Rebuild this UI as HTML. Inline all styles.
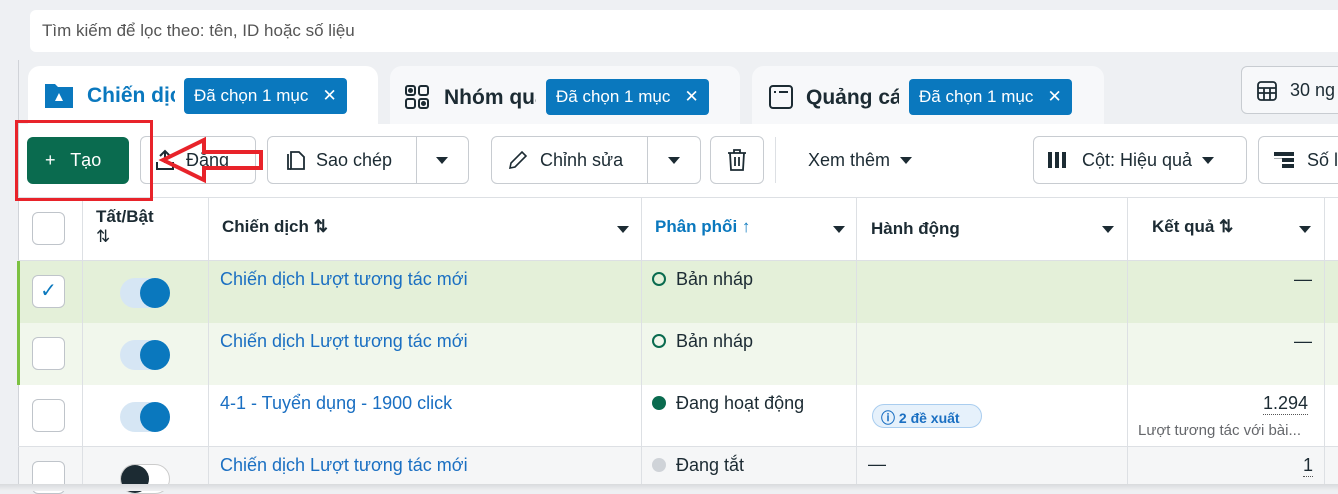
<!DOCTYPE html><html><head><meta charset="utf-8"><style>
*{box-sizing:border-box;margin:0;padding:0}
body{width:1338px;height:491px;overflow:hidden;background:#eef0f3;font-family:"Liberation Sans",sans-serif;color:#1c2b33;position:relative;font-size:18px}
.a{position:absolute}
.search{left:30px;top:10px;width:1320px;height:42px;background:#fff;border-radius:6px;color:#555;font-size:17px;padding:11px 12px}
.tab{top:66px;height:64px;border-radius:12px 12px 0 0;background:#f7f8fa}
.pill{background:#0a78be;color:#fff;font-size:17px;border-radius:4px;height:36px;padding:8px 10px;white-space:nowrap}
.btn{top:136px;height:48px;border:1px solid #c8ccd1;border-radius:6px;background:#fff;font-size:18px;padding:13px 0}
.hdr{font-weight:bold;font-size:17px}
.vl{position:absolute;top:197px;bottom:0;width:1px;background:#dde0e4}
.hl{position:absolute;left:18px;right:0;height:1px;background:#dde0e4}
.cb{position:absolute;left:32px;width:33px;height:33px;border:1px solid #bfc4ca;border-radius:6px;background:#fff}
.tg{position:absolute;left:120px;width:50px;height:30px;border-radius:15px;background:#d6e6f4}
.tg:after{content:"";position:absolute;right:0;top:0;width:30px;height:30px;border-radius:50%;background:#0a78be}
.lnk{position:absolute;left:220px;color:#1a6fc2;font-size:18px}
.st{position:absolute;left:652px;font-size:18px}
.dot{display:inline-block;width:14px;height:14px;border-radius:50%;margin-right:10px;vertical-align:-1px}
.car{display:inline-block;width:0;height:0;border-left:6px solid transparent;border-right:6px solid transparent;border-top:7px solid #1c2b33;vertical-align:2px}
.tt{font-size:21px;font-weight:bold;overflow:hidden;white-space:nowrap}
</style></head><body>
<div class="a search">Tìm kiếm để lọc theo: tên, ID hoặc số liệu</div>
<div class="a" style="left:18px;top:60px;width:1px;height:431px;background:#d0d3d8"></div>
<div class="a tab" style="left:28px;width:350px;background:#fff"></div>
<div class="a tab" style="left:390px;width:350px"></div>
<div class="a tab" style="left:752px;width:352px"></div>
<div class="a" style="left:1241px;top:66px;width:110px;height:48px;border:1px solid #c8ccd1;border-radius:6px;background:#f7f8fa;padding:13px 0 0 48px">30 ng</div>
<svg class="a" style="left:1256px;top:80px" width="22" height="22" viewBox="0 0 22 22" fill="none" stroke="#1c2b33" stroke-width="1.8"><rect x="2" y="2" width="18" height="18" rx="3"/><path d="M2 8h18M2 13h18M8 8v12M14 8v12"/></svg>
<svg class="a" style="left:43px;top:82px" width="32" height="28" viewBox="0 0 32 28"><path d="M2 2h10l3 3h15v21H2z" fill="#0a78be"/><path d="M16 11l4 8h-8z" fill="#fff"/></svg>
<div class="a tt" style="left:87px;top:84px;color:#0a78be;width:88px">Chiến dịch</div>
<div class="a pill" style="left:184px;top:78px">Đã chọn 1 mục&nbsp;&nbsp;&nbsp;✕</div>
<svg class="a" style="left:404px;top:84px" width="26" height="26" viewBox="0 0 26 26" fill="none" stroke="#1c2b33" stroke-width="2"><rect x="2" y="2" width="9" height="9" rx="2"/><rect x="15" y="2" width="9" height="9" rx="2"/><rect x="2" y="15" width="9" height="9" rx="2"/><rect x="15" y="15" width="9" height="9" rx="2"/><circle cx="6.5" cy="6.5" r="1.5" fill="#1c2b33"/><circle cx="19.5" cy="19.5" r="1.5" fill="#1c2b33"/></svg>
<div class="a tt" style="left:444px;top:86px;width:92px">Nhóm quảng</div>
<div class="a pill" style="left:546px;top:79px">Đã chọn 1 mục&nbsp;&nbsp;&nbsp;✕</div>
<svg class="a" style="left:768px;top:84px" width="26" height="26" viewBox="0 0 26 26" fill="none" stroke="#1c2b33" stroke-width="2"><rect x="2" y="2" width="22" height="22" rx="3"/><path d="M6 8h2M11 8h9"/></svg>
<div class="a tt" style="left:806px;top:86px;width:93px">Quảng cáo</div>
<div class="a pill" style="left:909px;top:79px">Đã chọn 1 mục&nbsp;&nbsp;&nbsp;✕</div>
<div class="a" style="left:19px;top:124px;right:0;height:74px;background:#fff"></div>
<div class="a" style="left:27px;top:137px;width:102px;height:47px;background:#0a6b4f;border-radius:6px;color:#fff;font-size:18px;padding:13px 0 0 18px">+&nbsp;&nbsp; Tạo</div>
<div class="a btn" style="left:140px;width:116px;padding-left:45px">Đăng</div>
<svg class="a" style="left:154px;top:148px" width="22" height="24" viewBox="0 0 22 24" fill="none" stroke="#1c2b33" stroke-width="2"><path d="M11 15V3M6 8l5-5 5 5M3 14v7h16v-7"/></svg>
<div class="a btn" style="left:267px;width:202px;padding-left:48px">Sao chép</div>
<div class="a" style="left:416px;top:137px;width:1px;height:46px;background:#c8ccd1"></div>
<span class="a car" style="left:436px;top:157px"></span>
<svg class="a" style="left:284px;top:148px" width="22" height="24" viewBox="0 0 22 24" fill="none" stroke="#1c2b33" stroke-width="1.8"><path d="M7 4h8l5 5v12H7z"/><path d="M4 6v15h3"/></svg>
<div class="a btn" style="left:491px;width:210px;padding-left:48px">Chỉnh sửa</div>
<div class="a" style="left:647px;top:137px;width:1px;height:46px;background:#c8ccd1"></div>
<span class="a car" style="left:668px;top:157px"></span>
<svg class="a" style="left:507px;top:149px" width="22" height="22" viewBox="0 0 22 22" fill="none" stroke="#1c2b33" stroke-width="1.6"><path d="M3 19l1-5L15 3l4 4L8 18z"/></svg>
<div class="a btn" style="left:710px;width:54px"></div>
<svg class="a" style="left:726px;top:148px" width="22" height="24" viewBox="0 0 22 24" fill="none" stroke="#1c2b33" stroke-width="1.8"><path d="M2 5h18M8 5V2h6v3M4 5l1 17h12l1-17M9 9v9M13 9v9"/></svg>
<div class="a" style="left:775px;top:137px;width:1px;height:46px;background:#dde0e4"></div>
<div class="a" style="left:808px;top:150px">Xem thêm &nbsp;<span class="car"></span></div>
<div class="a btn" style="left:1033px;width:214px;padding-left:48px">Cột: Hiệu quả &nbsp;<span class="car"></span></div>
<div class="a" style="left:1048px;top:152px;width:18px;height:16px;background:linear-gradient(90deg,#1c2b33 0 4px,transparent 4px 7px,#1c2b33 7px 11px,transparent 11px 14px,#1c2b33 14px)"></div>
<div class="a btn" style="left:1258px;width:100px;padding-left:48px">Số l</div>
<div class="a" style="left:1274px;top:152px;width:20px;height:16px;background:linear-gradient(#1c2b33 0 4px,transparent 4px 6px,#1c2b33 6px 10px,transparent 10px 12px,#1c2b33 12px);clip-path:polygon(0 0,100% 0,100% 100%,40% 100%,40% 40%,0 40%)"></div>
<div class="a" style="left:19px;top:197px;right:0;bottom:0;background:#fff"></div>
<div class="a" style="left:19px;top:261px;right:0;height:62px;background:#e4f0d9"></div>
<div class="a" style="left:19px;top:323px;right:0;height:62px;background:#f1f7ec"></div>
<div class="a" style="left:19px;top:447px;right:0;height:44px;background:#f5f6f7"></div>
<div class="a" style="left:17px;top:261px;width:3px;height:124px;background:#7cc142"></div>
<div class="hl" style="top:197px"></div><div class="hl" style="top:260px"></div><div class="hl" style="top:446px"></div>
<div class="vl" style="left:82px"></div><div class="vl" style="left:208px"></div><div class="vl" style="left:641px"></div><div class="vl" style="left:856px"></div><div class="vl" style="left:1127px"></div><div class="vl" style="left:1324px"></div>
<div class="cb" style="top:212px"></div>
<div class="a hdr" style="left:96px;top:207px">Tất/Bật<br><span style="font-weight:normal">⇅</span></div>
<div class="a hdr" style="left:222px;top:217px">Chiến dịch ⇅</div><span class="a car" style="left:617px;top:226px"></span>
<div class="a hdr" style="left:655px;top:217px;color:#0a78be">Phân phối ↑</div><span class="a car" style="left:833px;top:226px"></span>
<div class="a hdr" style="left:871px;top:219px">Hành động</div><span class="a car" style="left:1102px;top:226px"></span>
<div class="a hdr" style="left:1152px;top:217px">Kết quả ⇅</div><span class="a car" style="left:1299px;top:226px"></span>
<div class="cb" style="top:275px;color:#0a78be;font-size:20px;text-align:center;line-height:31px">✓</div>
<div class="cb" style="top:337px"></div><div class="cb" style="top:399px"></div><div class="cb" style="top:461px"></div>
<div class="tg" style="top:278px"></div><div class="tg" style="top:340px"></div><div class="tg" style="top:402px"></div>
<div class="a" style="left:120px;top:464px;width:50px;height:30px;border-radius:15px;background:#fff;border:1px solid #ccc"><div style="width:28px;height:28px;border-radius:50%;background:#1c2b33"></div></div>
<div class="lnk" style="top:269px">Chiến dịch Lượt tương tác mới</div>
<div class="lnk" style="top:331px">Chiến dịch Lượt tương tác mới</div>
<div class="lnk" style="top:393px">4-1 - Tuyển dụng - 1900 click</div>
<div class="lnk" style="top:455px">Chiến dịch Lượt tương tác mới</div>
<div class="st" style="top:269px"><span class="dot" style="border:2px solid #0a6b4f"></span>Bản nháp</div>
<div class="st" style="top:331px"><span class="dot" style="border:2px solid #0a6b4f"></span>Bản nháp</div>
<div class="st" style="top:393px"><span class="dot" style="background:#0a6b4f"></span>Đang hoạt động</div>
<div class="st" style="top:455px"><span class="dot" style="background:#cfd3d8"></span>Đang tắt</div>
<div class="a" style="left:872px;top:404px;width:110px;height:24px;border:1px solid #a9cdef;border-radius:12px;background:#e6f1fb;color:#1a6fc2;font-size:14px;font-weight:bold;padding:3px 0 0 8px">ⓘ 2 đề xuất</div>
<div class="a" style="left:868px;top:454px">—</div>
<div class="a" style="left:1294px;top:269px">—</div>
<div class="a" style="left:1294px;top:331px">—</div>
<div class="a" style="left:1263px;top:393px;border-bottom:1px dotted #555">1.294</div>
<div class="a" style="left:1138px;top:422px;font-size:15px;color:#65676b">Lượt tương tác với bài...</div>
<div class="a" style="left:1303px;top:455px;border-bottom:1px dotted #555">1</div>
<div class="a" style="left:0;top:484px;width:1338px;height:7px;background:linear-gradient(#d8dadd,#f0f1f3)"></div>
<div class="a" style="left:15px;top:120px;width:138px;height:81px;border:3px solid #e8232a"></div>
<svg class="a" style="left:158px;top:135px" width="110" height="52" viewBox="0 0 110 52" fill="none" stroke="#e8232a" stroke-width="4"><path d="M5 25L46 5v12h57v16H46v12z"/></svg>
</body></html>
